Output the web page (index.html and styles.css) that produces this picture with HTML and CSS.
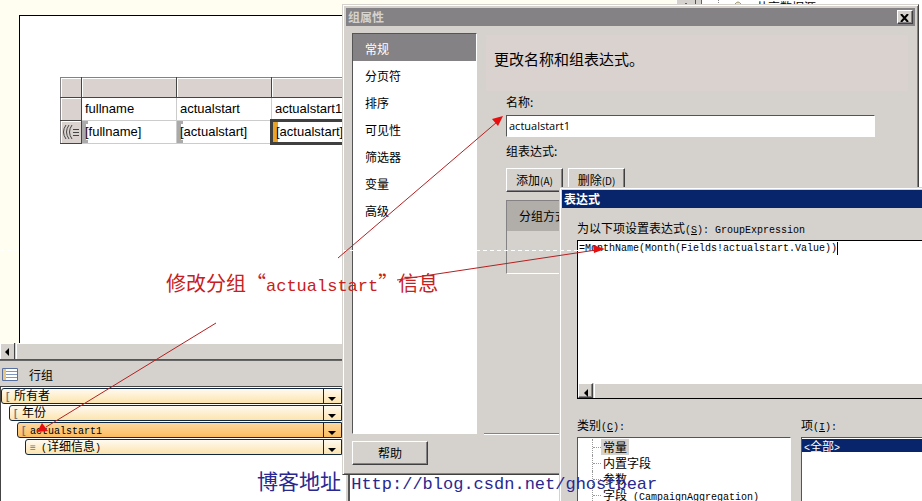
FILE: index.html
```
<!DOCTYPE html>
<html lang="zh-CN">
<head>
  <meta charset="utf-8">
  <title>组属性</title>
  <link rel="stylesheet" href="styles.css">
</head>
<body>
  <div class="workspace">
    <main class="designer">
      <div class="surface">
        <div class="paper">
          <table class="tablix">
            <tr class="handles"><th></th><th></th><th></th><th></th></tr>
            <tr><th></th><td>fullname</td><td>actualstart</td><td>actualstart1</td></tr>
            <tr>
              <th>
                <svg width="18" height="16" fill="none" stroke="#444"><path d="M4 1Q-1 8 4 15M7 1Q2 8 7 15M10 1Q5 8 10 15M11 5.500h6M11 8.500h6M11 11.500h6"/></svg>
              </th>
              <td class="grouped">[fullname]</td>
              <td class="grouped">[actualstart]</td>
              <td class="grouped current">[actualstart]</td>
            </tr>
          </table>
        </div>
        <div class="vscroll"><i class="up"></i></div>
      </div>
      <div class="hscroll"><button aria-label="left"><i class="left"></i></button><span class="thumb"></span></div>
    </main>
    <aside class="explorer">
      <svg width="50" height="6"><path d="M12.500 0v6" stroke="#888" stroke-dasharray="1 1"/><path d="M29 4q3-4 6 0" fill="#eee8c0" stroke="#a09870"/></svg>
      <span>共享数据源</span>
    </aside>
    <section class="groups">
      <h2>
        <svg width="17" height="14"><path d="M.5.5h15v12H.5z" fill="#fff" stroke="#5870a0"/><path d="M1 1h3v11H1z" fill="#e8c880"/><path d="M4 3.500h11M4 6.500h11M4 9.500h11" stroke="#8098c0"/></svg>
        行组
      </h2>
      <div class="row-groups">
        <div class="group"><span><b>[</b>所有者</span><button aria-label="所有者"><i class="down"></i></button></div>
        <div class="group level-1"><span><b>[</b>年份</span><button aria-label="年份"><i class="down"></i></button></div>
        <div class="group level-2 selected"><span><b>[</b><code>actualstart1</code></span><button aria-label="actualstart1"><i class="down"></i></button></div>
        <div class="group level-3"><span><b>≡</b><code>(</code>详细信息<code>)</code></span><button aria-label="详细信息"><i class="down"></i></button></div>
      </div>
      <div class="column-groups"></div>
    </section>
  </div>

  <div class="dialog properties">
    <div class="title">组属性
      <button aria-label="close"><svg width="10" height="8"><path d="M1 0l7 8M8 0L1 8" stroke="#000" stroke-width="2"/></svg></button>
    </div>
    <div class="content">
      <nav>
        <a href="#" class="active">常规</a>
        <a href="#">分页符</a>
        <a href="#">排序</a>
        <a href="#">可见性</a>
        <a href="#">筛选器</a>
        <a href="#">变量</a>
        <a href="#">高级</a>
      </nav>
      <div class="page">
        <h1>更改名称和组表达式。</h1>
        <div class="fields">
          <label for="name">名称:</label>
          <input id="name" type="text" value="actualstart1">
          <p>组表达式:</p>
          <div class="buttons">
            <button>添加<small>(A)</small></button>
            <button>删除<small>(D)</small></button>
          </div>
          <div class="expressions"><div>分组方式:</div></div>
        </div>
      </div>
    </div>
    <button class="help">帮助</button>
  </div>

  <div class="dialog expression">
    <div class="title">表达式</div>
    <div class="content">
      <label for="expr">为以下项设置表达式<code>(<u>S</u>): GroupExpression</code></label>
      <div class="editor">
        <textarea id="expr" spellcheck="false">=MonthName(Month(Fields!actualstart.Value))</textarea>
        <div class="hscroll"><button aria-label="left"><i class="left"></i></button><span class="thumb"></span></div>
      </div>
      <div class="lists">
        <div>
          <h3>类别<code>(<u>C</u>):</code></h3>
          <ul class="tree">
            <li><span class="picked">常量</span></li>
            <li><span>内置字段</span></li>
            <li><span>参数</span></li>
            <li><span>字段<code> (CampaignAggregation)</code></span></li>
          </ul>
        </div>
        <div>
          <h3>项<code>(<u>I</u>):</code></h3>
          <ul class="items">
            <li><code>&lt;</code>全部<code>&gt;</code></li>
          </ul>
        </div>
      </div>
    </div>
  </div>

  <svg class="arrows" width="922" height="501">
    <path d="M0 250.500h578" stroke="#fff" stroke-dasharray="4 3"/>
    <path d="M837.500 242v13" stroke="#000"/>
    <g stroke="#b42020" fill="none">
      <path d="M338 258L497 122"/>
      <path d="M216 323L46 427"/>
      <path d="M397 280L596 250"/>
    </g>
    <g fill="#e60e0e">
      <path d="M503 116l-5 10-6-7z"/>
      <path d="M37 432l5-9 6 8z"/>
      <path d="M605 249l-12-4 1 8z"/>
    </g>
  </svg>
  <div class="note">修改分组“<code>actualstart</code>”信息</div>
  <div class="watermark">博客地址<code> Http://blog.csdn.net/ghostbear</code></div>
</body>
</html>
```
FILE: styles.css
```
* {
  box-sizing: border-box;
}

html, body {
  height: 100%;
  margin: 0;
  overflow: hidden;
}

body {
  position: relative;
  color: #000;
  font: 12px/16px "Noto Sans CJK SC", sans-serif;
}

button, input, textarea {
  margin: 0;
  padding: 0;
  border: 0;
  border-radius: 0;
  color: inherit;
  font: inherit;
}

h1, h2, h3, p, ul {
  margin: 0;
  padding: 0;
  font-weight: normal;
  list-style: none;
}

code {
  font: 10px/12px "Liberation Mono", monospace;
  white-space: pre;
}

/* designer */
.workspace {
  display: grid;
  grid-template: 1fr 141px / 1fr 221px;
  height: 100%;
  background: #d5d2cd;
}

.designer {
  display: flex;
  flex-direction: column;
  min-width: 0;
  padding-right: 5px;
}

.surface {
  display: flex;
  flex: 1;
  gap: 24px;
  padding-left: 19px;
  background: #fffef0;
}

.paper {
  flex: 1;
  margin-top: 15px;
  padding: 61px 0 0 40px;
  border: 1px solid #000;
  border-width: 1px 0 0 1px;
  background: #fff;
}

.vscroll {
  width: 20px;
  border-right: 1px solid #555;
  border-left: 1px solid #fff;
  background: #d5d2cd;
  line-height: 4px;
  text-align: center;
}

.tablix {
  border-collapse: collapse;
  table-layout: fixed;
  width: 306px;
  font: 13px/16px "Liberation Sans", sans-serif;
}

.tablix td, .tablix th {
  width: 95px;
  height: 23px;
  padding: 0 3px;
  border: 1px solid #ccc;
  white-space: nowrap;
}

.tablix th {
  border-color: #848284 #444 #444 #848284;
  background: #d9d2cf;
  box-shadow: inset 1px 1px #fff;
}

.tablix th:first-child {
  width: 21px;
  padding: 0 0 0 1px;
}

.tablix th svg {
  display: block;
}

.tablix .handles th {
  height: 20px;
}

.tablix .grouped {
  background: linear-gradient(#aaa, #aaa) 0 0 / 4px 100% no-repeat, linear-gradient(#aaa, #aaa) 0 0 / 6px 3px no-repeat, linear-gradient(#aaa, #aaa) 0 100% / 6px 3px no-repeat;
}

.tablix .current {
  background: linear-gradient(#e8a428, #e8a428) 0 0 / 5px 100% no-repeat;
  border: 3px solid #404040;
}

.hscroll {
  display: flex;
  height: 17px;
  background: #d5d2cd;
}

.designer .hscroll {
  border-bottom: 1px solid #555;
}

.hscroll button {
  width: 15px;
  background: #d5d2cd;
  border-right: 1px solid #444;
  box-shadow: inset 1px 1px #fff;
}

.thumb {
  flex: 1;
  margin-left: 1px;
  border: 1px solid #fff;
  border-width: 1px 0 0 1px;
}

.left, .down, .up {
  display: inline-block;
  border: 4px solid transparent;
}

.left {
  border-width: 4px 4px 4px 0;
  border-right-color: #000;
}

.down {
  border-width: 4px 4px 0;
  border-top-color: #000;
}

.up {
  border-width: 0 4px 4px;
  border-bottom-color: #000;
}

.explorer {
  display: flex;
  padding-left: 4px;
  border-left: 1px solid #666;
  background: #fff;
}

.explorer span {
  margin-top: -1px;
}

.groups {
  display: grid;
  grid-column: 1 / 3;
  grid-template: 26px 1fr / 3fr 5fr;
}

.groups h2 {
  display: flex;
  grid-column: 1 / 3;
  align-items: center;
  gap: 10px;
  padding: 2px 0 0 2px;
  border-top: 1px solid #666;
  font-size: 12px;
}

.row-groups {
  display: flex;
  flex-direction: column;
  gap: 1px;
  padding: 1px 4px 0 0;
  border-top: 1px solid #444;
  border-left: 1px solid #444;
  background: #fff;
}

.column-groups {
  margin-left: 2px;
  border-left: 2px solid #555;
  background: #fff;
}

.group {
  display: flex;
  height: 16px;
  border: 1px solid #102840;
  border-radius: 3px 0 0 3px;
  background: linear-gradient(#fffaf0, #fce4ae);
  line-height: 12px;
}

.group span {
  flex: 1;
  padding-left: 4px;
}

.group b {
  display: inline-block;
  width: 8px;
  color: #777;
  font: bold 10px/12px "Liberation Sans", sans-serif;
}

.group button {
  width: 18px;
  border-left: 1px solid #102840;
  background: none;
  line-height: 8px;
}

.level-1 {
  margin-left: 8px;
}

.level-2 {
  margin-left: 16px;
}

.level-3 {
  margin-left: 24px;
}

.level-3 b {
  width: 11px;
}

.group.selected {
  background: linear-gradient(#fdd8a0, #fcbc60);
}

/* dialogs */
.dialog {
  position: absolute;
  padding: 3px;
  border: 1px solid;
  border-color: #d5d2cd #404040 #404040 #d5d2cd;
  background: #d5d2cd;
  box-shadow: inset 1px 1px #fff, inset -1px -1px #848284;
}

.title {
  display: flex;
  align-items: center;
  justify-content: space-between;
  height: 18px;
  padding: 0 2px;
  color: #fff;
  font-weight: bold;
}

.dialog button {
  border: 1px solid;
  border-color: #fff #404040 #404040 #fff;
  background: #d5d2cd;
  box-shadow: inset -1px -1px #848284;
}

.title button {
  width: 16px;
  height: 14px;
  line-height: 8px;
}

.properties {
  top: 4px;
  right: 3px;
  left: 342px;
}

.properties .title {
  background: #848284;
  color: #d5d2cd;
}

.properties .content {
  display: grid;
  grid-template-columns: 125px 1fr;
  gap: 7px;
  padding: 7px 7px 7px 6px;
}

nav {
  min-height: 401px;
  border: 1px solid;
  border-color: #555 #fff #fff #555;
  background: #fff;
}

nav a {
  display: block;
  height: 27px;
  padding-left: 12px;
  color: #000;
  line-height: 29px;
  text-decoration: none;
}

nav .active {
  background: #848284;
  color: #fff;
}

.page {
  padding: 2px 0 0 2px;
  border-bottom: 1px solid #848284;
  box-shadow: 0 1px #fff;
}

h1 {
  padding-bottom: 8px;
  padding-left: 8px;
  background: #dad2ce;
  font-size: 15px;
  line-height: 48px;
}

.fields {
  display: flex;
  flex-direction: column;
  padding: 3px 33px 0 20px;
}

#name {
  height: 22px;
  margin: 5px 0 6px;
  padding: 0 2px 2px;
  border: 1px solid;
  border-color: #555 #fff #fff #555;
  background: #fff;
  font: 11px/16px "Open Sans", sans-serif;
}

.buttons {
  display: flex;
  gap: 5px;
  margin: 9px 0 8px;
}

.buttons button {
  width: 57px;
  height: 24px;
}

.buttons small {
  font-size: 10px;
}

.expressions {
  height: 74px;
  border: 1px solid;
  border-color: #848284 #fff #fff #848284;
}

.expressions div {
  padding-left: 12px;
  background: #b1aeaa;
  line-height: 30px;
}

.help {
  display: block;
  width: 76px;
  height: 24px;
  margin: 0 0 6px 6px;
}

.expression {
  top: 187px;
  right: -20px;
  left: 559px;
  padding: 2px;
}

.expression .title {
  background: #08246b;
}

.expression .content {
  padding: 12px 0 0 15px;
}

.expression label {
  display: block;
  height: 20px;
}

.editor {
  border: 1px solid #000;
  background: #fff;
}

.editor textarea {
  display: block;
  width: 100%;
  height: 142px;
  padding: 2px 1px;
  background: none;
  font: 10px/12px "Liberation Mono", monospace;
  resize: none;
  outline: 0;
}

.editor .hscroll {
  height: 15px;
}

.lists {
  display: grid;
  grid-template-columns: 214px 1fr;
  gap: 10px;
  margin-top: 18px;
}

.lists h3 {
  height: 20px;
  font-size: 12px;
}

.tree, .items {
  height: 70px;
  border: 1px solid;
  border-color: #555 #fff #fff #555;
  background: #fff;
}

.tree {
  padding: 1px 0 0 14px;
}

.tree li {
  display: flex;
  align-items: center;
  height: 16px;
  border-left: 1px dotted #999;
}

.tree li::before {
  width: 8px;
  border-top: 1px dotted #999;
  content: "";
}

.tree span {
  padding: 0 2px;
}

.picked {
  background: #d5d2cd;
}

.items li {
  height: 13px;
  margin-top: 1px;
  padding-left: 2px;
  background: #08246b;
  color: #fff;
  line-height: 13px;
}

/* annotations */
.arrows {
  position: absolute;
  top: 0;
  left: 0;
}

.note, .watermark {
  position: absolute;
  white-space: nowrap;
}

.note {
  top: 271px;
  left: 166px;
  color: #c82020;
  font-size: 20px;
  line-height: 24px;
}

.watermark {
  top: 468px;
  left: 257px;
  color: #282890;
  font-size: 21px;
  line-height: 24px;
}

.note code, .watermark code {
  font-size: 17px;
}
```
